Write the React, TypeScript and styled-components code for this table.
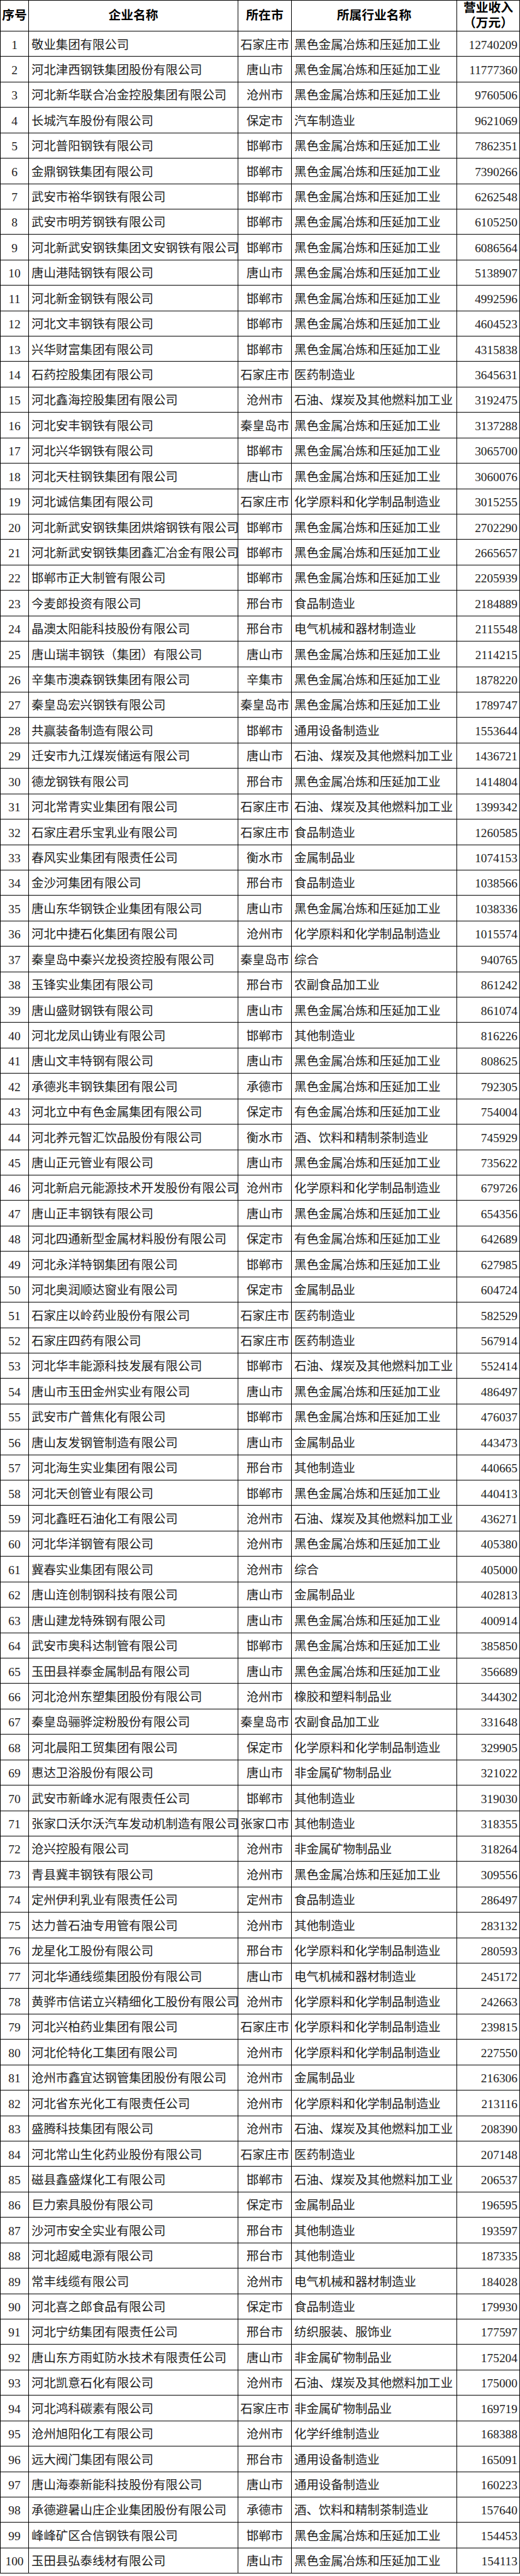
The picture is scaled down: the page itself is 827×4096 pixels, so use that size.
import React from "react";
import styled, { createGlobalStyle } from "styled-components";

const GlobalStyle = createGlobalStyle`
  html, body {
    margin: 0;
    padding: 0;
    background: #fff;
  }
`;

const IND: Record<string, string> = {
  H: "黑色金属冶炼和压延加工业",
  Y: "有色金属冶炼和压延加工业",
  S: "石油、煤炭及其他燃料加工业",
  C: "化学原料和化学制品制造业",
  Q: "汽车制造业",
  M: "医药制造业",
  F: "食品制造业",
  D: "电气机械和器材制造业",
  T: "通用设备制造业",
  J: "金属制品业",
  Z: "综合",
  N: "农副食品加工业",
  O: "其他制造业",
  W: "酒、饮料和精制茶制造业",
  X: "橡胶和塑料制品业",
  K: "非金属矿物制品业",
  R: "化学纤维制造业",
  P: "纺织服装、服饰业",
};

const RAW = `敬业集团有限公司|石家庄市|H|12740209
河北津西钢铁集团股份有限公司|唐山市|H|11777360
河北新华联合冶金控股集团有限公司|沧州市|H|9760506
长城汽车股份有限公司|保定市|Q|9621069
河北普阳钢铁有限公司|邯郸市|H|7862351
金鼎钢铁集团有限公司|邯郸市|H|7390266
武安市裕华钢铁有限公司|邯郸市|H|6262548
武安市明芳钢铁有限公司|邯郸市|H|6105250
河北新武安钢铁集团文安钢铁有限公司|邯郸市|H|6086564
唐山港陆钢铁有限公司|唐山市|H|5138907
河北新金钢铁有限公司|邯郸市|H|4992596
河北文丰钢铁有限公司|邯郸市|H|4604523
兴华财富集团有限公司|邯郸市|H|4315838
石药控股集团有限公司|石家庄市|M|3645631
河北鑫海控股集团有限公司|沧州市|S|3192475
河北安丰钢铁有限公司|秦皇岛市|H|3137288
河北兴华钢铁有限公司|邯郸市|H|3065700
河北天柱钢铁集团有限公司|唐山市|H|3060076
河北诚信集团有限公司|石家庄市|C|3015255
河北新武安钢铁集团烘熔钢铁有限公司|邯郸市|H|2702290
河北新武安钢铁集团鑫汇冶金有限公司|邯郸市|H|2665657
邯郸市正大制管有限公司|邯郸市|H|2205939
今麦郎投资有限公司|邢台市|F|2184889
晶澳太阳能科技股份有限公司|邢台市|D|2115548
唐山瑞丰钢铁（集团）有限公司|唐山市|H|2114215
辛集市澳森钢铁集团有限公司|辛集市|H|1878220
秦皇岛宏兴钢铁有限公司|秦皇岛市|H|1789747
共赢装备制造有限公司|邯郸市|T|1553644
迁安市九江煤炭储运有限公司|唐山市|S|1436721
德龙钢铁有限公司|邢台市|H|1414804
河北常青实业集团有限公司|石家庄市|S|1399342
石家庄君乐宝乳业有限公司|石家庄市|F|1260585
春风实业集团有限责任公司|衡水市|J|1074153
金沙河集团有限公司|邢台市|F|1038566
唐山东华钢铁企业集团有限公司|唐山市|H|1038336
河北中捷石化集团有限公司|沧州市|C|1015574
秦皇岛中秦兴龙投资控股有限公司|秦皇岛市|Z|940765
玉锋实业集团有限公司|邢台市|N|861242
唐山盛财钢铁有限公司|唐山市|H|861074
河北龙凤山铸业有限公司|邯郸市|O|816226
唐山文丰特钢有限公司|唐山市|H|808625
承德兆丰钢铁集团有限公司|承德市|H|792305
河北立中有色金属集团有限公司|保定市|Y|754004
河北养元智汇饮品股份有限公司|衡水市|W|745929
唐山正元管业有限公司|唐山市|H|735622
河北新启元能源技术开发股份有限公司|沧州市|C|679726
唐山正丰钢铁有限公司|唐山市|H|654356
河北四通新型金属材料股份有限公司|保定市|Y|642689
河北永洋特钢集团有限公司|邯郸市|H|627985
河北奥润顺达窗业有限公司|保定市|J|604724
石家庄以岭药业股份有限公司|石家庄市|M|582529
石家庄四药有限公司|石家庄市|M|567914
河北华丰能源科技发展有限公司|邯郸市|S|552414
唐山市玉田金州实业有限公司|唐山市|H|486497
武安市广普焦化有限公司|邯郸市|H|476037
唐山友发钢管制造有限公司|唐山市|J|443473
河北海生实业集团有限公司|邢台市|O|440665
河北天创管业有限公司|邯郸市|H|440413
河北鑫旺石油化工有限公司|沧州市|S|436271
河北华洋钢管有限公司|沧州市|H|405380
冀春实业集团有限公司|沧州市|Z|405000
唐山连创制钢科技有限公司|唐山市|J|402813
唐山建龙特殊钢有限公司|唐山市|H|400914
武安市奥科达制管有限公司|邯郸市|H|385850
玉田县祥泰金属制品有限公司|唐山市|H|356689
河北沧州东塑集团股份有限公司|沧州市|X|344302
秦皇岛骊骅淀粉股份有限公司|秦皇岛市|N|331648
河北晨阳工贸集团有限公司|保定市|C|329905
惠达卫浴股份有限公司|唐山市|K|321022
武安市新峰水泥有限责任公司|邯郸市|O|319030
张家口沃尔沃汽车发动机制造有限公司|张家口市|O|318355
沧兴控股有限公司|沧州市|K|318264
青县冀丰钢铁有限公司|沧州市|H|309556
定州伊利乳业有限责任公司|定州市|F|286497
达力普石油专用管有限公司|沧州市|O|283132
龙星化工股份有限公司|邢台市|C|280593
河北华通线缆集团股份有限公司|唐山市|D|245172
黄骅市信诺立兴精细化工股份有限公司|沧州市|C|242663
河北兴柏药业集团有限公司|石家庄市|C|239815
河北伦特化工集团有限公司|沧州市|C|227550
沧州市鑫宜达钢管集团股份有限公司|沧州市|J|216306
河北省东光化工有限责任公司|沧州市|C|213116
盛腾科技集团有限公司|沧州市|S|208390
河北常山生化药业股份有限公司|石家庄市|M|207148
磁县鑫盛煤化工有限公司|邯郸市|S|206537
巨力索具股份有限公司|保定市|J|196595
沙河市安全实业有限公司|邢台市|O|193597
河北超威电源有限公司|邢台市|O|187335
常丰线缆有限公司|沧州市|D|184028
河北喜之郎食品有限公司|保定市|F|179930
河北宁纺集团有限责任公司|邢台市|P|177597
唐山东方雨虹防水技术有限责任公司|唐山市|K|175204
河北凯意石化有限公司|沧州市|S|175000
河北鸿科碳素有限公司|石家庄市|K|169719
沧州旭阳化工有限公司|沧州市|R|168388
远大阀门集团有限公司|邢台市|T|165091
唐山海泰新能科技股份有限公司|唐山市|T|160223
承德避暑山庄企业集团股份有限公司|承德市|W|157640
峰峰矿区合信钢铁有限公司|邯郸市|H|154453
玉田县弘泰线材有限公司|唐山市|H|154113`;

const rows = RAW.split("\n").map((line, i) => {
  const [name, city, ind, revenue] = line.split("|");
  return { no: i + 1, name, city, industry: IND[ind], revenue };
});

const Sheet = styled.div`
  width: 827px;
  border-top: 1px solid #000;
  border-left: 1px solid #000;
  box-sizing: border-box;
  font-family: "Liberation Serif", "Noto Sans CJK SC", serif;
  color: #222;
`;

const Row = styled.div<{ $head?: boolean }>`
  display: grid;
  grid-template-columns: 45px 333px 85px 263px 100px;
  height: ${(p) => (p.$head ? "49px" : "40.43px")};
`;

const Cell = styled.div<{ $align?: "left" | "center" | "right" }>`
  display: flex;
  align-items: center;
  justify-content: ${(p) =>
    p.$align === "left" ? "flex-start" : p.$align === "right" ? "flex-end" : "center"};
  box-sizing: border-box;
  border-right: 1px solid #000;
  border-bottom: 1px solid #000;
  padding: 3px ${(p) => (p.$align === "right" ? "3px" : "0")} 0
    ${(p) => (p.$align === "left" ? "4px" : "0")};
  overflow: hidden;
  white-space: nowrap;
  font-size: 19.4px;
  line-height: 1;
`;

const HeadCell = styled(Cell)`
  flex-direction: column;
  justify-content: center;
  align-items: center;
  padding: 0;
  font-weight: 700;
  font-size: 19.8px;
  line-height: 23.7px;
  color: #000;
  white-space: normal;
  text-align: center;
`;

export default function App() {
  return (
    <>
      <GlobalStyle />
      <Sheet>
        <Row $head>
          <HeadCell>序号</HeadCell>
          <HeadCell>企业名称</HeadCell>
          <HeadCell>所在市</HeadCell>
          <HeadCell>所属行业名称</HeadCell>
          <HeadCell>
            <span>营业收入</span>
            <span>（万元）</span>
          </HeadCell>
        </Row>
        {rows.map((r) => (
          <Row key={r.no}>
            <Cell>{r.no}</Cell>
            <Cell $align="left">{r.name}</Cell>
            <Cell>{r.city}</Cell>
            <Cell $align="left">{r.industry}</Cell>
            <Cell $align="right">{r.revenue}</Cell>
          </Row>
        ))}
      </Sheet>
    </>
  );
}
